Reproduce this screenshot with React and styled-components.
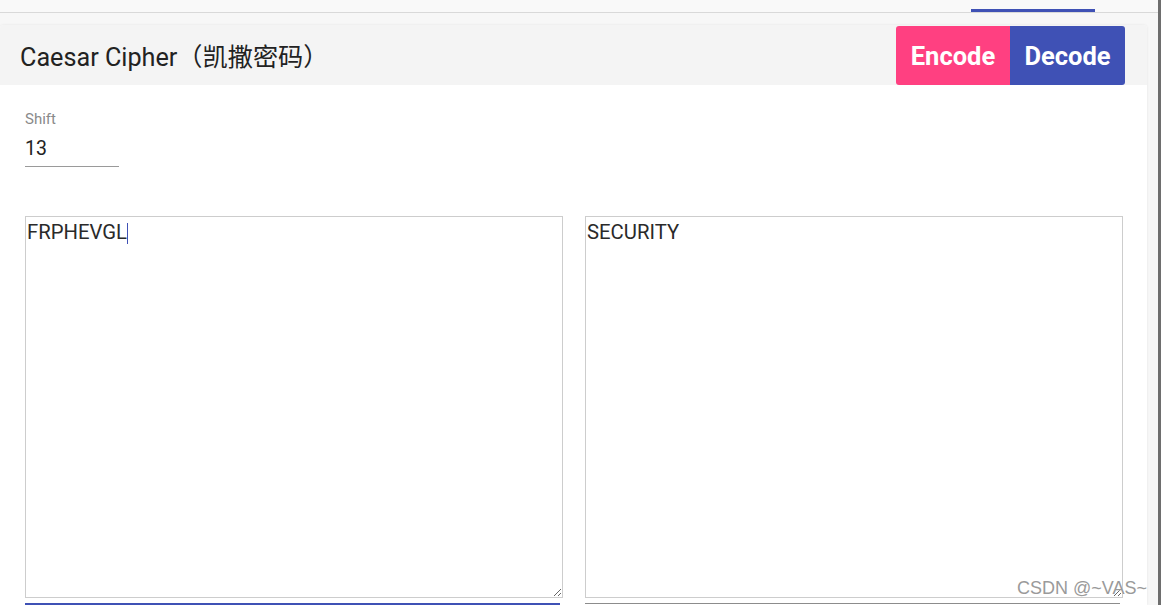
import styled, { createGlobalStyle } from "styled-components";

const GlobalStyle = createGlobalStyle`
  html, body {
    margin: 0;
    padding: 0;
    height: 605px;
    overflow: hidden;
    background: #f7f7f7;
    font-family: Roboto, "Noto Sans CJK SC", sans-serif;
  }
`;

const Page = styled.div`
  display: flex;
  height: 605px;
`;

const Main = styled.div`
  flex: 1;
  display: flex;
  flex-direction: column;
`;

const Scrollbar = styled.div`
  width: 4px;
  background: #6e6e6e;
`;

const TopBar = styled.div`
  height: 12px;
  background: #f9f9f9;
  border-bottom: 1px solid #d9d9d9;
  display: flex;
  justify-content: flex-end;
  align-items: flex-end;
  padding-right: 63px;
`;

const TabIndicator = styled.div`
  width: 124px;
  height: 3px;
  background: #3f51b5;
`;

const Area = styled.div`
  display: flex;
  padding-top: 12px;
  padding-right: 11px;
  flex: 1;
  min-height: 0;
`;

const Card = styled.section`
  flex: 1;
  background: #fff;
  border-radius: 4px 4px 0 0;
  box-shadow: 0 0 3px rgba(0, 0, 0, 0.08);
  display: flex;
  flex-direction: column;
`;

const Header = styled.header`
  height: 60px;
  background: #f4f4f4;
  border-radius: 4px 4px 0 0;
  display: flex;
  align-items: center;
  justify-content: space-between;
  padding: 0 22px 0 20px;
`;

const Title = styled.h2`
  margin: 0;
  font-weight: 400;
  font-size: 25.2px;
  color: #222;
`;

const ButtonGroup = styled.div`
  display: flex;
  height: 59px;
  margin-top: 1px;
  border-radius: 3px;
  overflow: hidden;
`;

const ActionButton = styled.button`
  border: none;
  width: ${(p) => p.$w}px;
  background: ${(p) => p.$bg};
  color: #fff;
  font-family: Roboto, sans-serif;
  font-weight: 700;
  font-size: 25.5px;
  padding: 0;
`;

const Body = styled.div`
  padding: 26px 24px 0 25px;
  display: flex;
  flex-direction: column;
`;

const Field = styled.div`
  width: 94px;
  border-bottom: 1px solid #9a9a9a;
  padding-bottom: 5px;
`;

const Label = styled.div`
  font-size: 15px;
  color: #8a8a8a;
  line-height: 17px;
`;

const ValueInput = styled.div`
  font-size: 19.5px;
  color: #222;
  margin-top: 9px;
  line-height: 24px;
`;

const Editors = styled.div`
  display: grid;
  grid-template-columns: 538px 538px;
  column-gap: 22px;
  margin-top: 49px;
`;

const EditorCol = styled.div`
  display: flex;
  flex-direction: column;
`;

const Box = styled.div`
  position: relative;
  height: 382px;
`;

const TextArea = styled.textarea`
  box-sizing: border-box;
  width: 100%;
  height: 382px;
  margin: 0;
  border: 1px solid #cdcdcd;
  padding: 3px 1px;
  font-family: Roboto, sans-serif;
  font-size: 20.3px;
  line-height: 24px;
  color: #2a2a2a;
  background: #fff;
  resize: vertical;
  outline: none;
  display: block;
`;

const Mirror = styled.div`
  position: absolute;
  top: 1px;
  left: 1px;
  padding: 3px 1px;
  font-family: Roboto, sans-serif;
  font-size: 20.3px;
  line-height: 24px;
  color: transparent;
  pointer-events: none;
  white-space: pre;
`;

const Caret = styled.span`
  display: inline-block;
  width: 1px;
  height: 21px;
  background: #3f51b5;
  vertical-align: -5px;
`;

const Underline = styled.div`
  margin-top: 5px;
  width: 535px;
  height: ${(p) => (p.$active ? 2 : 1)}px;
  background: ${(p) => (p.$active ? "#3f51b5" : "#8c8c8c")};
`;

const Watermark = styled.div`
  position: absolute;
  right: 14px;
  top: 578px;
  font-family: "Liberation Sans", Arial, sans-serif;
  font-size: 18px;
  color: #9a9a9a;
  text-shadow: 0 0 1px #fff;
  pointer-events: none;
`;

export default function App() {
  const input = "FRPHEVGL";
  const output = "SECURITY";
  return (
    <>
      <GlobalStyle />
      <Page>
        <Main>
          <TopBar>
            <TabIndicator />
          </TopBar>
          <Area>
            <Card>
              <Header>
                <Title>Caesar Cipher（凯撒密码）</Title>
                <ButtonGroup>
                  <ActionButton $bg="#ff4081" $w={114}>Encode</ActionButton>
                  <ActionButton $bg="#3f51b5" $w={115}>Decode</ActionButton>
                </ButtonGroup>
              </Header>
              <Body>
                <Field>
                  <Label>Shift</Label>
                  <ValueInput>13</ValueInput>
                </Field>
                <Editors>
                  <EditorCol>
                    <Box>
                      <TextArea readOnly value={input} />
                      <Mirror>
                        {input}
                        <Caret />
                      </Mirror>
                    </Box>
                    <Underline $active />
                  </EditorCol>
                  <EditorCol>
                    <Box>
                      <TextArea readOnly value={output} />
                    </Box>
                    <Underline />
                  </EditorCol>
                </Editors>
              </Body>
            </Card>
          </Area>
        </Main>
        <Scrollbar />
      </Page>
      <Watermark>CSDN @~VAS~</Watermark>
    </>
  );
}
